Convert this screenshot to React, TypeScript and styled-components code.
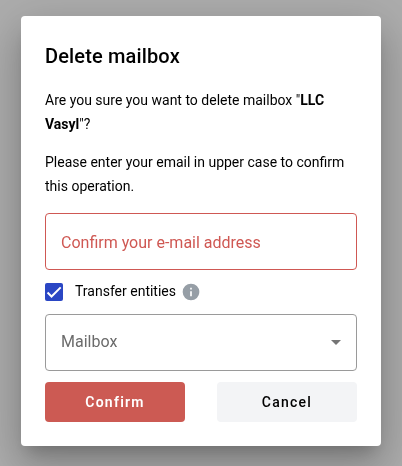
import React from "react";
import styled, { createGlobalStyle } from "styled-components";

const Global = createGlobalStyle`
  * { box-sizing: border-box; }
  body { margin: 0; background: #adadad; font-family: Roboto, sans-serif; overflow: hidden; }
`;
const Backdrop = styled.div`
  height: 466px;
  padding: 16px 21px 20px;
  background: #adadad;
`;
const Dialog = styled.section`
  height: 430px;
  padding: 24px;
  border-radius: 4px;
  background: #fff;
  color: #000;
  display: flex;
  flex-direction: column;
  will-change: transform;
  box-shadow: 0 11px 15px -7px rgba(0,0,0,.2), 0 24px 38px 3px rgba(0,0,0,.14), 0 9px 46px 8px rgba(0,0,0,.12);
`;
const Title = styled.h2`
  margin: 0 0 16px;
  font-size: 20px;
  line-height: 32px;
  font-weight: 500;
  letter-spacing: 0.15px;
`;
const Text = styled.p`
  margin: 0 0 14px;
  font-size: 14px;
  line-height: 24px;
  strong { font-weight: 700; }
`;
const Field = styled.div<{ $error?: boolean }>`
  height: 57px;
  flex: none;
  border: 1px solid ${p => (p.$error ? "#cf5853" : "#9a9a9a")};
  border-radius: 4px;
  padding: ${p => (p.$error ? "1px 15px 0" : "0 15px 2px")};
  display: flex;
  align-items: center;
  justify-content: space-between;
  color: ${p => (p.$error ? "#cf5853" : "#6b6b6b")};
  font-size: 16px;
`;
const ConfirmField = styled(Field)`
  margin-top: 1px;
`;
const CheckRow = styled.label`
  height: 44px;
  display: flex;
  align-items: center;
  font-size: 14px;
`;
const CheckLabel = styled.span`
  padding-bottom: 2px;
`;
const CheckBox = styled.span`
  width: 18px;
  height: 18px;
  margin-right: 12px;
  border-radius: 2px;
  background: #2a46c4;
  display: flex;
`;
const InfoIcon = styled.svg`
  margin-left: 5px;
`;
const Arrow = styled.svg`
  display: block;
  margin-top: 1px;
`;
const Actions = styled.div`
  display: flex;
  justify-content: space-between;
  margin-top: 11px;
`;
const Button = styled.button<{ $danger?: boolean }>`
  width: 140px;
  height: 40px;
  border: 0;
  border-radius: 4px;
  font: ${p => (p.$danger ? 600 : 500)} 14px Roboto, sans-serif;
  letter-spacing: 1.25px;
  background: ${p => (p.$danger ? "#cc5a53" : "#f3f4f6")};
  color: ${p => (p.$danger ? "#fff" : "#000")};
`;

export default function App() {
  return (
    <Backdrop>
      <Global />
      <Dialog>
        <Title>Delete mailbox</Title>
        <Text>Are you sure you want to delete mailbox "<strong>LLC<br />Vasyl</strong>"?</Text>
        <Text>Please enter your email in upper case to confirm<br />this operation.</Text>
        <ConfirmField $error>Confirm your e-mail address</ConfirmField>
        <CheckRow>
          <CheckBox>
            <svg width="18" height="18" viewBox="0 0 24 24" fill="none" stroke="#fff" strokeWidth="2.6"><path d="M3.4 12.7 8.7 18 20.9 5.8" /></svg>
          </CheckBox>
          <CheckLabel>Transfer entities</CheckLabel>
          <InfoIcon width="20" height="20" viewBox="0 0 24 24" fill="#969ea6"><path d="M12 2a10 10 0 1 0 0 20 10 10 0 0 0 0-20zm1 15h-2v-6h2v6zm0-8h-2V7h2v2z" /></InfoIcon>
        </CheckRow>
        <Field>
          Mailbox
          <Arrow width="10" height="5" viewBox="0 0 10 5"><path d="M0 0h10L5 5z" fill="#757575" /></Arrow>
        </Field>
        <Actions>
          <Button $danger>Confirm</Button>
          <Button>Cancel</Button>
        </Actions>
      </Dialog>
    </Backdrop>
  );
}
